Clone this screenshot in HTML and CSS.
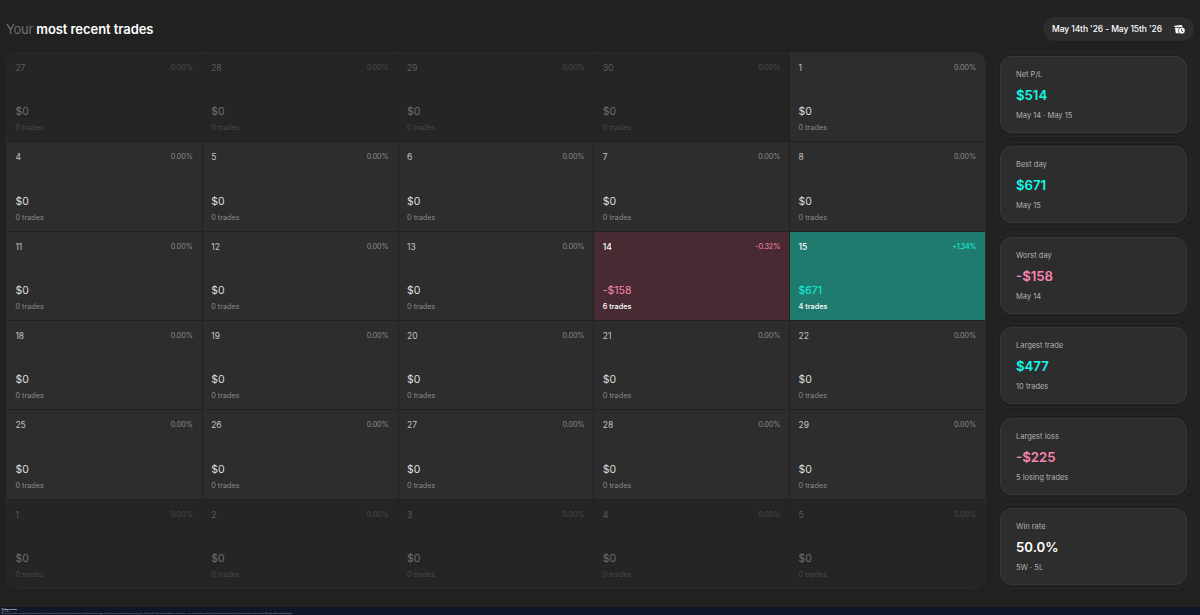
FILE: index.html
```html
<!DOCTYPE html>
<html lang="en">
<head>
    <meta charset="UTF-8">
    <meta name="viewport" content="width=device-width, initial-scale=1.0">
    <title>Most recent trades</title>
    <link rel="stylesheet" href="styles.css">
</head>
<body>
    <header class="top">
        <h1><span>Your</span> most recent trades</h1>
        <button type="button" class="date-range">
            May 14th '26 - May 15th '26
            <svg class="date-icon" viewBox="0 0 24 24">
                <path fill="#fff" d="M1 4l16-2 2 5H1z"/>
                <path fill="#fff" d="M2 8h18v12H4z"/>
                <path d="M1 7.5h13" stroke="#2d2d2d" stroke-width="1"/>
                <circle cx="17" cy="14.5" r="7.5" fill="#fff" stroke="#2d2d2d" stroke-width="1.5"/>
                <path d="M16.5 10.5v4.5l3.5 2" fill="none" stroke="#2d2d2d" stroke-width="2"/>
            </svg>
        </button>
    </header>

    <main class="content">
        <!-- days are added by the script -->
        <section class="calendar" id="calendar"></section>

        <aside class="stats" id="stats"></aside>
    </main>

    <footer class="bottom">
        <b>Trading overview</b>
        <p>Overview</p>
        <p>Most recent trades are shown for the selected period, with the result of each day, the number of trades and the change of the balance in percent for every trading day of the month. Days without trades are shown with a zero result, and days outside of the month are shown darker than the others in the calendar. <b>Results of the selected period</b></p>
    </footer>

    <script>
        const days = [27, 28, 29, 30, 1, 4, 5, 6, 7, 8, 11, 12, 13, 14, 15, 18, 19, 20, 21, 22, 25, 26, 27, 28, 29, 1, 2, 3, 4, 5];

        // days that have trades, by position in the calendar
        const results = {
            13: { type: "loss", percent: "-0.32%", amount: "-$158", trades: 6 },
            14: { type: "win", percent: "+1.34%", amount: "$671", trades: 4 }
        };

        const stats = [
            { label: "Net P/L", value: "$514", note: "May 14 · May 15", type: "up" },
            { label: "Best day", value: "$671", note: "May 15", type: "up" },
            { label: "Worst day", value: "-$158", note: "May 14", type: "down" },
            { label: "Largest trade", value: "$477", note: "10 trades", type: "up" },
            { label: "Largest loss", value: "-$225", note: "5 losing trades", type: "down" },
            { label: "Win rate", value: "50.0%", note: "5W · 5L", type: "" }
        ];

        function renderCalendar() {
            document.getElementById("calendar").innerHTML = days.map((day, i) => {
                const r = results[i] || { type: "", percent: "0.00%", amount: "$0", trades: 0 };
                const outside = i < 4 || i > 24 ? "outside" : "";
                return `<div class="day ${r.type} ${outside}">
                    <div class="day-top"><span class="number">${day}</span><span class="percent">${r.percent}</span></div>
                    <div><div class="amount">${r.amount}</div><div class="trades">${r.trades} trades</div></div>
                </div>`;
            }).join("");
        }

        function renderStats() {
            document.getElementById("stats").innerHTML = stats.map(s =>
                `<div class="stat-frame"><div class="stat">
                    <div class="label">${s.label}</div>
                    <div class="value ${s.type}">${s.value}</div>
                    <div class="note">${s.note}</div>
                </div></div>`
            ).join("");
        }

        renderCalendar();
        renderStats();
    </script>
</body>
</html>
```
FILE: styles.css
```css
* {
    box-sizing: border-box;
}

body {
    margin: 0;
    height: 615px;
    overflow: hidden;
    display: flex;
    flex-direction: column;
    background: #212121;
    color: white;
    font-family: Inter, "Liberation Sans", sans-serif;
}

.top {
    display: flex;
    justify-content: space-between;
    align-items: center;
    height: 52px;
    padding: 6px 6px 0;
}

h1 {
    margin: 0;
    font-size: 13px;
    font-weight: 600;
    letter-spacing: -0.06px;
}

h1 span {
    color: #707070;
    font-weight: 400;
    letter-spacing: -0.3px;
}

.date-range {
    display: flex;
    align-items: center;
    justify-content: space-between;
    width: 151px;
    height: 24px;
    padding: 0 9px;
    border: none;
    border-radius: 12px;
    background: #2d2d2d;
    color: white;
    font-family: inherit;
    font-size: 8.5px;
    font-weight: 500;
    letter-spacing: -0.1px;
    white-space: nowrap;
}

.date-icon {
    width: 11px;
    height: 11px;
}

.content {
    display: flex;
    gap: 10px;
    height: 555px;
    padding-left: 6px;
}

.calendar {
    display: grid;
    grid-template-columns: repeat(5, 1fr);
    grid-template-rows: repeat(6, 1fr);
    gap: 1px;
    width: 980px;
    height: 537px;
    border: 1px solid #2b2b2b;
    border-radius: 12px;
    background: #222222;
    overflow: hidden;
}

.day {
    display: flex;
    flex-direction: column;
    justify-content: space-between;
    padding: 9px 9px 8px 8.4px;
    background: #2d2d2d;
    line-height: 12px;
}

.day-top {
    display: flex;
    justify-content: space-between;
}

.number {
    color: #c4c4c4;
    font-size: 8.5px;
}

.percent {
    color: #8a8a8a;
    font-size: 7.3px;
    letter-spacing: -0.15px;
}

.amount {
    color: #dedede;
    font-size: 10.5px;
    line-height: 14px;
}

.trades {
    margin-top: 3px;
    color: #888888;
    font-size: 7.3px;
    line-height: 11px;
}

.outside {
    background: #252525;
}

.outside .number {
    color: #5c5c5c;
}

.outside .amount {
    color: #707070;
}

.outside .percent,
.outside .trades {
    color: #494949;
}

.loss {
    background: #482b32;
}

.win {
    background: #207b6f;
}

.loss .number,
.loss .trades,
.win .number,
.win .trades {
    color: white;
    font-weight: 500;
}

.loss .percent,
.loss .amount {
    color: #f788b0;
}

.win .percent,
.win .amount {
    color: #0df5dc;
}

.win .percent {
    letter-spacing: -0.4px;
}

.stats {
    display: flex;
    flex-direction: column;
    gap: 5.4px;
    width: 195px;
}

.stat-frame {
    flex: none;
    height: 85px;
    padding: 3px;
    border: 1px solid #282828;
    border-radius: 15px;
}

.stat {
    height: 77px;
    padding: 11px 15px;
    border: 1px solid #393939;
    border-radius: 12px;
    background: #2d2d2d;
}

.label,
.note {
    color: #b0b0b0;
    font-size: 7.5px;
    line-height: 13px;
}

.value {
    margin: 4px 0;
    font-size: 13.2px;
    font-weight: 600;
    line-height: 20px;
}

.up {
    color: #12fae6;
}

.down {
    color: #fb85b0;
}

.bottom {
    flex: 1;
    padding: 0.5px 1.5px 0;
    background: #101828;
    color: #ffffff;
    font-size: 1.8px;
    line-height: 2.1px;
}

.bottom p {
    margin: 0;
    color: #8791a5;
    white-space: nowrap;
}
```
